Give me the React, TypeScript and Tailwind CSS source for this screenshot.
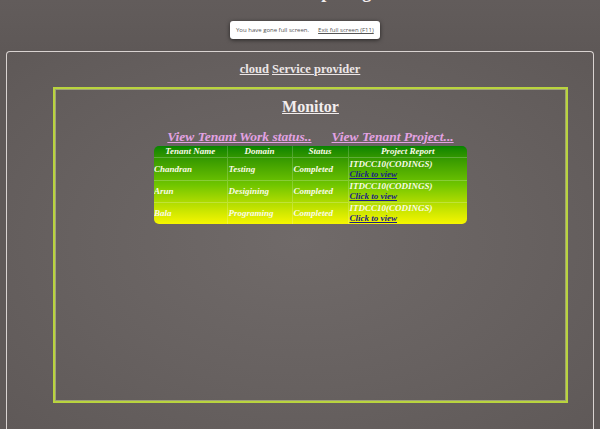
import React from "react";

const serif = { fontFamily: '"Liberation Serif", "Times New Roman", serif' };

const rows = [
  { name: "Chandran", domain: "Testing", status: "Completed" },
  { name: "Arun", domain: "Desigining", status: "Completed" },
  { name: "Bala", domain: "Programing", status: "Completed" },
];

export default function App() {
  return (
    <div
      className="w-[600px] h-[429px] overflow-hidden flex flex-col bg-[#5f5958]"
      style={serif}
    >
      {/* page header, title scrolled mostly out of view */}
      <header className="relative h-[51px] shrink-0 bg-gradient-to-b from-[#625c5b] to-[#5e5857]">
        <div className="absolute left-0 right-0 top-[-17px] text-center text-[18px] font-bold text-[#f2eeee] leading-none pl-[4px]">
          Cloud Computing
        </div>
        <div
          className="absolute left-[230px] top-[21px] w-[150px] h-[18px] rounded-[3px] bg-white shadow-[0_1px_4px_rgba(0,0,0,0.6)] flex items-center gap-[9px] pl-[6px] text-[6px] text-[#555] whitespace-nowrap"
          style={{ fontFamily: '"Open Sans", "Liberation Sans", sans-serif' }}
        >
          <span>You have gone full screen.</span>
          <span className="underline">Exit full screen (F11)</span>
        </div>
      </header>

      <main className="flex-1 mx-[6px] rounded-t-[4px] border-t border-x border-[#d9d3d1] bg-[radial-gradient(ellipse_at_center,#706a69_0%,#676160_55%,#5f5958_100%)] flex flex-col">
        <div className="text-center mt-[11px] text-[12.5px] font-bold text-[#ece6e6] leading-none">
          <span className="underline">cloud</span>{" "}
          <span className="underline">Service provider</span>
        </div>

        <section className="ml-[46px] w-[515px] h-[316px] mt-[11px] border-2 border-[#b9d43e] shadow-[inset_0_0_0_1px_rgba(230,245,150,0.45)] flex flex-col items-center">
          <h1 className="mt-[10px] text-[16px] font-bold text-[#f3eeee] underline leading-none">
            Monitor
          </h1>
          <div className="mt-[15px] flex gap-[20px] text-[13.5px] font-bold italic text-[#e3a2e3] leading-none">
            <span className="underline">View Tenant Work status..</span>
            <span className="underline">View Tenant Project...</span>
          </div>

          <table className="mt-[3px] w-[313px] border-collapse rounded-[5px] overflow-hidden bg-gradient-to-b from-[#058400] via-[#70c600] to-[#f6f600] text-[9px] font-bold italic text-[#fbfbe8] leading-[10px]">
            <thead>
              <tr className="h-[11px]">
                <th className="w-[73px] p-0 font-bold text-center border-r border-[#ffffff30]">Tenant Name</th>
                <th className="w-[65px] p-0 font-bold text-center border-r border-[#ffffff30]">Domain</th>
                <th className="w-[56px] p-0 font-bold text-center border-r border-[#ffffff30]">Status</th>
                <th className="p-0 font-bold text-center">Project Report</th>
              </tr>
            </thead>
            <tbody>
              {rows.map((r, i) => (
                <tr
                  key={r.name}
                  className={`border-t border-[#ffffff38] ${i === 0 ? "h-[23px]" : "h-[22px]"}`}
                >
                  <td className="p-0 text-left align-middle border-r border-[#ffffff30]">{r.name}</td>
                  <td className="p-0 text-left align-middle border-r border-[#ffffff30] pl-[1px]">{r.domain}</td>
                  <td className="p-0 text-left align-middle border-r border-[#ffffff30] pl-[1px]">{r.status}</td>
                  <td className="p-0 text-left align-middle pl-[1px]">
                    <div>ITDCC10(CODINGS)</div>
                    <div className="underline text-[#1c1c86]">Click to view</div>
                  </td>
                </tr>
              ))}
            </tbody>
          </table>
        </section>
      </main>
    </div>
  );
}
